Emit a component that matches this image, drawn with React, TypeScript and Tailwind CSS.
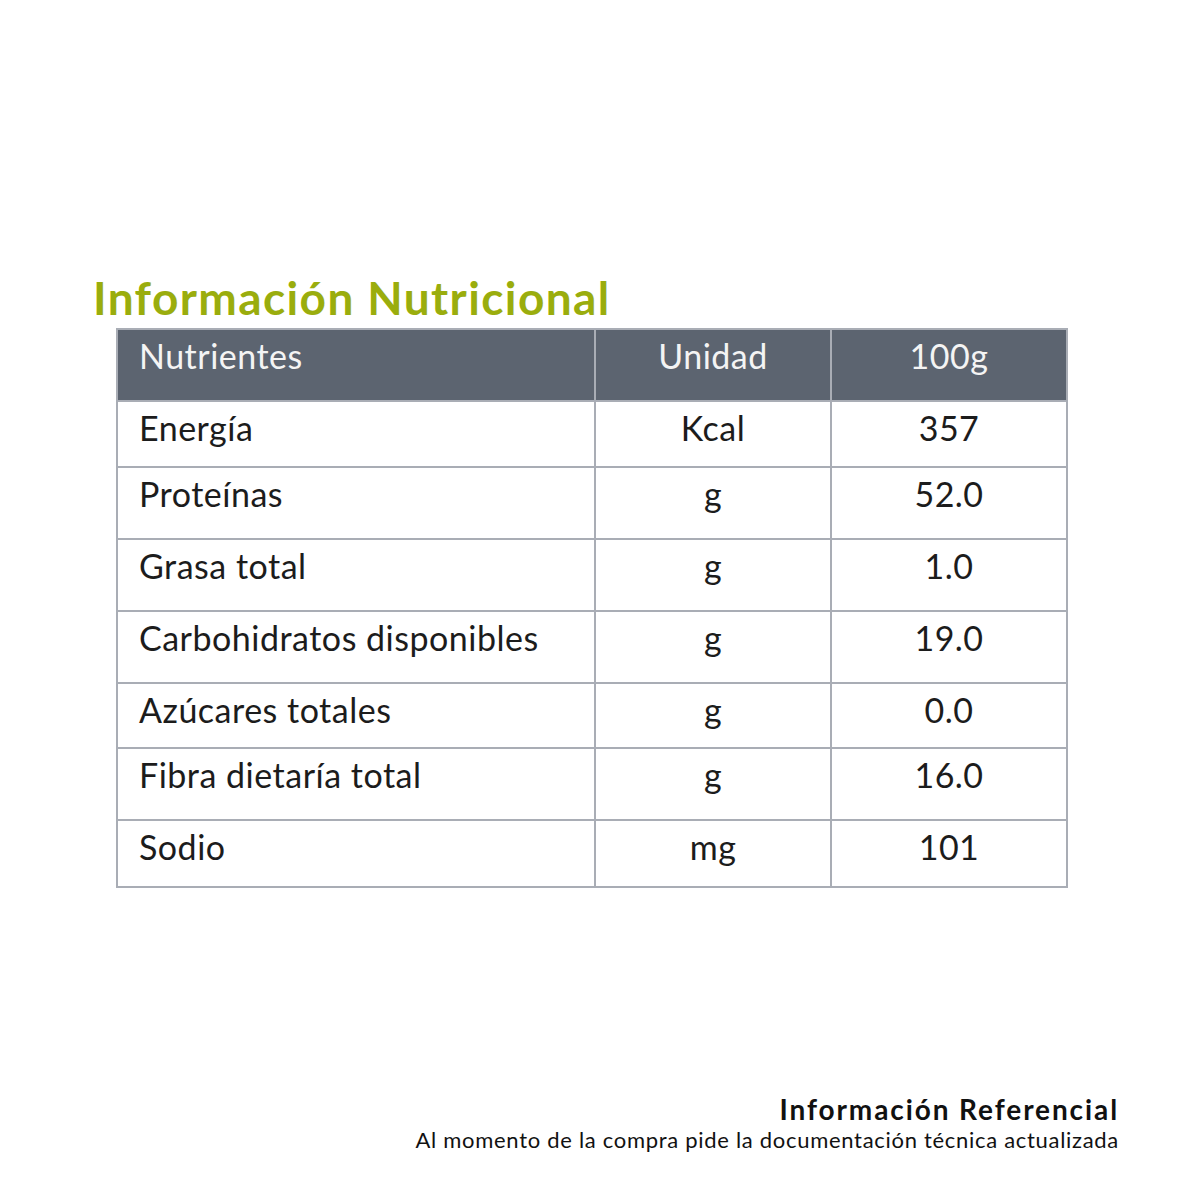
const rows = [
  { name: 'Energía', unit: 'Kcal', value: '357', h: 'h-[66px]' },
  { name: 'Proteínas', unit: 'g', value: '52.0', h: 'h-[72px]' },
  { name: 'Grasa total', unit: 'g', value: '1.0', h: 'h-[72px]' },
  { name: 'Carbohidratos disponibles', unit: 'g', value: '19.0', h: 'h-[72px]' },
  { name: 'Azúcares totales', unit: 'g', value: '0.0', h: 'h-[65px]' },
  { name: 'Fibra dietaría total', unit: 'g', value: '16.0', h: 'h-[72px]' },
  { name: 'Sodio', unit: 'mg', value: '101', h: 'h-[67px]' },
]

export default function App() {
  return (
    <div className="w-[1195px] h-[1195px] bg-white font-['Lato',sans-serif] flex flex-col">
      <div className="pt-[271px] pl-[93px]">
        <h1 className="text-[46px] leading-[54px] font-bold text-[#9aad0d] tracking-[1.4px]">
          Información Nutricional
        </h1>
      </div>
      <div className="pl-[116px] pt-[3px]">
        <table className="w-[950px] border-collapse table-fixed text-[34px] tracking-[0.5px]">
          <colgroup>
            <col className="w-[478px]" />
            <col className="w-[236px]" />
            <col className="w-[236px]" />
          </colgroup>
          <thead>
            <tr className="h-[72px] bg-[#5c6470] text-[#f4f4f4]">
              <th className="border-2 border-[#a9adb5] align-top text-left font-normal pl-[21px] pt-0">Nutrientes</th>
              <th className="border-2 border-[#a9adb5] align-top text-center font-normal pt-0">Unidad</th>
              <th className="border-2 border-[#a9adb5] align-top text-center font-normal pt-0">100g</th>
            </tr>
          </thead>
          <tbody className="text-[#1c1c1c]">
            {rows.map((r) => (
              <tr key={r.name} className={r.h}>
                <td className="border-2 border-[#a9adb5] align-top pl-[21px] pt-0">{r.name}</td>
                <td className="border-2 border-[#a9adb5] align-top text-center pt-0">{r.unit}</td>
                <td className="border-2 border-[#a9adb5] align-top text-center pt-0">{r.value}</td>
              </tr>
            ))}
          </tbody>
        </table>
      </div>
      <div className="mt-auto mb-[40px] pr-[76px] text-right text-[#111]">
        <p className="text-[28px] leading-[32px] font-bold tracking-[1.9px]">Información Referencial</p>
        <p className="text-[22px] leading-[30px] tracking-[0.7px]">Al momento de la compra pide la documentación técnica actualizada</p>
      </div>
    </div>
  )
}
